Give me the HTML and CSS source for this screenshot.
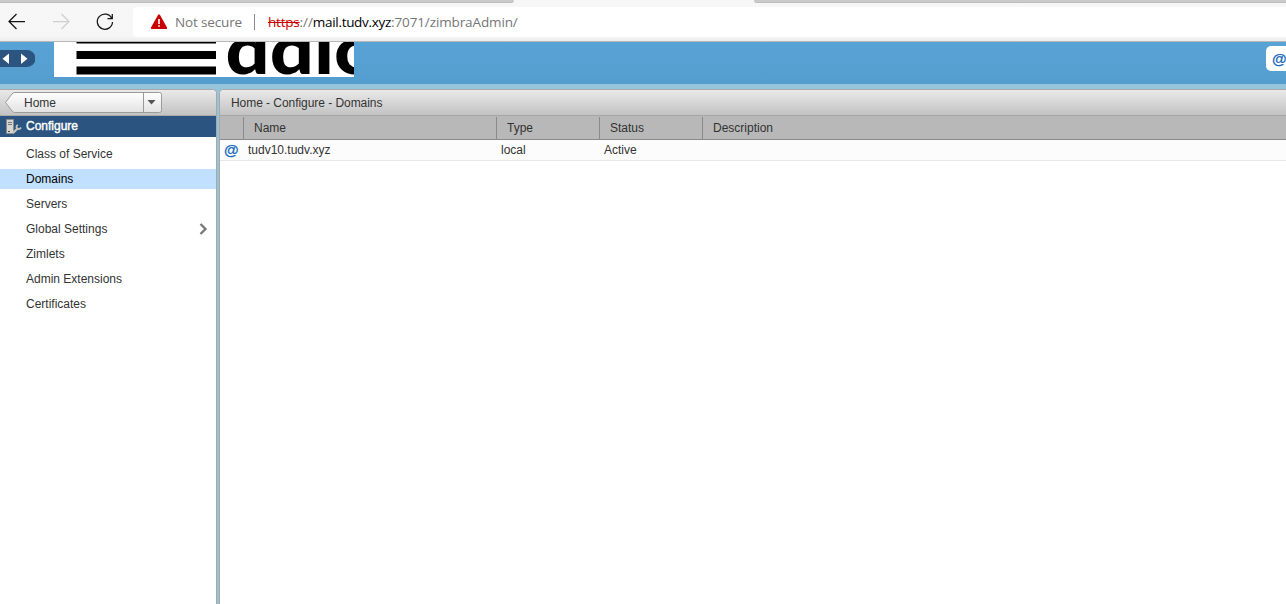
FILE: index.html
```html
<!DOCTYPE html>
<html lang="en">
<head>
<meta charset="utf-8">
<title>Zimbra Administration</title>
<link rel="stylesheet" href="styles.css">
</head>
<body>
<header class="browser">
  <div class="tabs"><i class="tab-left"></i><i class="tab-right"></i></div>
  <div class="toolbar">
    <svg class="nav" width="133" height="38" viewBox="0 3 133 38" fill="none" stroke="#151515" stroke-width="1.25">
      <path d="M25 21.5H9.500M16.500 14L9 21.500L16.500 29"/>
      <path stroke="#cfcfcf" d="M53 21.500H68.500M61.500 14L69 21.500L61.500 29"/>
      <path d="M111.800 18.500A7.600 7.600 0 1 0 112.500 22M112.300 14V18.700H107.500"/>
    </svg>
    <div class="address">
      <svg class="warn" width="16" height="16" viewBox="0 0 16 16"><path fill="#c90000" d="M7 1Q8-.3 9 1L16 13.500Q16.300 15 15 15H1Q-.3 15 0 13.500Z"/><path fill="#fff" d="M7.200 5H8.800V10H7.200ZM7.200 11.200H8.800V12.800H7.200Z"/></svg>
      <span class="insecure">Not secure</span><i class="divider"></i>
      <span class="url"><span class="scheme">https</span><span class="sep">://</span><span class="host">mail.tudv.xyz</span><span class="path">:7071/zimbraAdmin/</span></span>
    </div>
  </div>
</header>
<div class="banner">
  <svg class="history" width="35" height="17" viewBox="0 0 35 17"><path fill="#2b5580" d="M0 0H27A8.500 8.500 0 0 1 27 17H0Z"/><path fill="#fff" d="M9 3.500V14L2.500 8.700ZM21 3.500V14L27.500 8.700Z"/></svg>
  <svg class="logo" width="300" height="35" viewBox="54 42 300 35"><path fill="#fff" d="M54 42H354V77H54Z"/><path d="M76.500 42H216V43.500H76.500ZM76.500 51H216V59H76.500ZM76.500 66.500H216V74.500H76.500Z"/><text class="brand" x="225.500" y="73.500" textLength="146" lengthAdjust="spacingAndGlyphs">ɑdic</text></svg>
  <span class="account"><b class="at">@</b></span>
</div>
<div class="workspace">
  <aside class="sidebar">
    <div class="crumb">
      <svg width="162" height="24" viewBox="0 0 162 24"><defs><linearGradient id="button" x2="0" y2="1"><stop stop-color="#fff"/><stop offset="1" stop-color="#e2e2e2"/></linearGradient></defs><path fill="url(#button)" stroke="#9b9b9b" d="M14.500 2.500H159.500Q161.500 2.500 161.500 4.500V20.500Q161.500 22.500 159.500 22.500H14.500Q13 22.500 12 21L5.500 12.500L12 4Q13 2.500 14.500 2.500Z"/><path stroke="#999" d="M143.500 3V22"/><path fill="#555" d="M147.500 10H155.500L151.500 14.500Z"/></svg>
      <span>Home</span>
    </div>
    <div class="section">
      <svg width="17" height="16" viewBox="0 0 17 16"><path fill="#d6d6d2" stroke="#8b8b87" d="M1.500 .5H8.500V14.500H1.500Z"/><path stroke="#777" d="M3 3.500H7M3 5.500H7"/><path stroke="#444" d="M3 12.500H5"/><path fill="none" stroke="#c4c4c0" stroke-width="2.300" d="M8 14L13 9"/><path fill="none" stroke="#c4c4c0" stroke-width="1.800" d="M13 6Q10.500 7 12 9.500Q14.500 11 16 8.500"/></svg>
      <span>Configure</span>
    </div>
    <nav class="menu"><a>Class of Service</a><a class="selected">Domains</a><a>Servers</a><a>Global Settings<svg width="9" height="12" viewBox="0 0 9 12"><path d="M1.500 1L6.500 6L1.500 11" fill="none" stroke="#777" stroke-width="2.300"/></svg></a><a>Zimlets</a><a>Admin Extensions</a><a>Certificates</a></nav>
  </aside>
  <main class="content">
    <div class="title">Home - Configure - Domains</div>
    <div class="row head"><span></span><span>Name</span><span>Type</span><span>Status</span><span>Description</span></div>
    <div class="row record"><span><b class="at">@</b></span><span>tudv10.tudv.xyz</span><span>local</span><span>Active</span><span></span></div>
  </main>
</div>
</body>
</html>
```
FILE: styles.css
```css
* { box-sizing: border-box; }
body { margin: 0; height: 604px; overflow: hidden; display: flex; flex-direction: column; background: #96c4da; color: #333; font: 12px/15px "Liberation Sans", Arial, sans-serif; }
svg { display: block; flex: none; }
.browser { height: 42px; background: #f7f7f7; border-bottom: 1px solid #b5b7b8; }
.tabs { display: flex; justify-content: space-between; height: 3px; }
.tab-left, .tab-right { background: #cacaca; border-bottom: 1px solid #bdbdbd; }
.tab-left { width: 514px; border-radius: 0 0 3px 0; }
.tab-right { width: 532px; border-radius: 0 0 0 3px; }
.toolbar { display: flex; height: 38px; background: linear-gradient(#f7f7f7, #f6f6f6 33px, #ededed); }
.address { flex: 1; display: flex; align-items: center; height: 30px; margin-top: 4px; padding-left: 18px; background: #fff; border-radius: 4px 0 0 4px; font: 13.5px/20px "Open Sans", "Noto Sans", sans-serif; color: #767676; }
.insecure { flex: none; width: 87px; padding-left: 8px; letter-spacing: -.15px; white-space: nowrap; }
.divider { width: 1px; height: 16px; background: #8a8a8a; }
.url { margin-left: 13px; white-space: nowrap; }
.scheme { letter-spacing: -.2px; color: #c80000; text-decoration: line-through; }
.sep { letter-spacing: -.1px; }
.host { letter-spacing: -.3px; color: #000; }
.path { letter-spacing: -.12px; }
.banner { display: flex; height: 42px; background: linear-gradient(#58a3d5, #549dcf); }
.history { margin-top: 8px; }
.logo { margin-left: 19px; }
.brand { font: 900 68px "Lato", "Noto Sans", sans-serif; fill: #000; }
.account { flex: none; width: 20px; height: 25px; margin: 4px 0 0 auto; padding: 5px 0 0 6px; overflow: hidden; border-radius: 5px 0 0 5px; background: #fff; }
.at { font-size: 15px; line-height: 15px; color: #1768bd; -webkit-text-stroke: .15px #1768bd; }
.workspace { flex: 1; display: flex; gap: 2px; padding-top: 5px; }
.sidebar { width: 217px; background: #fff; border: solid #a7a7a7; border-width: 1px 1px 0 0; border-radius: 0 5px 0 0; overflow: hidden; }
.crumb { display: grid; height: 26px; background: linear-gradient(#e9e9e9, #c3c3c3); border-bottom: 1px solid #aaa; }
.crumb > * { grid-area: 1 / 1; }
.crumb span { z-index: 1; padding: 6px 0 0 24px; }
.section { display: flex; height: 21px; background: #2b5580; color: #fff; }
.section svg { margin: 3px 0 0 5px; }
.section span { padding: 3px 0 0 4px; -webkit-text-stroke: .4px #fff; }
.menu { padding-top: 7px; }
.menu a { display: flex; align-items: center; height: 20px; margin-bottom: 5px; padding: 0 8px 0 26px; }
.menu a svg { margin-left: auto; }
.menu .selected { background: #c1dfff; color: #000; }
.content { flex: 1; background: #fff; border: solid #a7a7a7; border-width: 1px 0 0 1px; border-radius: 5px 0 0 0; overflow: hidden; }
.title { height: 26px; padding: 6px 0 0 11px; letter-spacing: -.05px; background: linear-gradient(#e9e9e9, #c3c3c3); border-bottom: 1px solid #a6a6a6; }
.row { display: grid; grid-template-columns: 24px 253px 103px 103px 1fr; }
.head { height: 24px; padding-top: 1px; background: #b8b8b8; border-bottom: 1px solid #8a8a8a; }
.head span { border-right: 1px solid #8a8a8a; padding: 4px 0 0 10px; }
.head span:last-child { border: 0; }
.record { height: 21px; background: #fcfcfc; border-bottom: 1px solid #e9e9e9; }
.record span { padding: 3px 0 0 4px; }
.record span:first-child { padding-top: 2px; }
```
